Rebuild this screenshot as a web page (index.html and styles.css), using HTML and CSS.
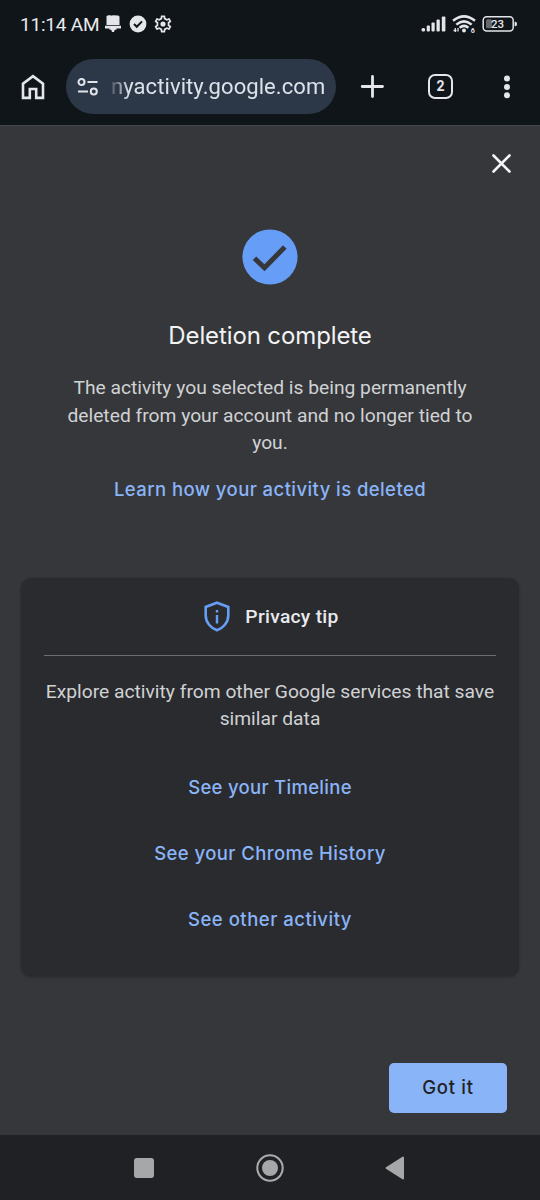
FILE: index.html
```html
<!DOCTYPE html>
<html lang="en">
<head>
<meta charset="utf-8">
<title>My Activity</title>
<link rel="stylesheet" href="styles.css">
</head>
<body>
<div class="screen">
  <header class="status">
    <span class="clock">11:14 AM</span>
    <svg class="s-app" width="18" height="18" viewBox="0 0 18 18"><path d="M2.500 1.500Q2.500 .5 4 .5L6 0 7 .8 9 .2 14 .5Q15.500 .6 15.500 2V10H2.500zM1 10.800H17V13.400H1zM5.500 13.200H12.500V14.800H10.800L10 17H8L7.200 14.800H5.500z" fill="#e4e6e9"/></svg>
    <svg class="s-check" width="18" height="18" viewBox="0 0 18 18"><circle cx="9" cy="9" r="8.400" fill="#e4e6e9"/><path d="M5 9 7.800 11.800 13 6.400" fill="none" stroke="#101519" stroke-width="2"/></svg>
    <svg class="s-gear" width="18" height="18" viewBox="1.500 1.500 21 21" fill="#e4e6e9"><path d="M19.430 12.980c.04-.32.070-.64.070-.98s-.03-.66-.07-.98l2.110-1.650c.19-.15.240-.42.120-.64l-2-3.460c-.12-.22-.39-.3-.61-.22l-2.490 1c-.52-.4-1.080-.73-1.690-.98l-.38-2.650A.488.488 0 0 0 14 2h-4c-.25 0-.46.180-.49.420l-.38 2.650c-.61.250-1.170.590-1.690.980l-2.490-1c-.23-.09-.49 0-.61.220l-2 3.460c-.13.220-.07.490.120.640l2.110 1.650c-.04.320-.07.650-.07.980s.03.660.070.980l-2.110 1.650c-.19.150-.24.420-.12.640l2 3.460c.12.220.39.300.610.220l2.490-1c.52.400 1.080.730 1.690.980l.38 2.650c.03.240.24.420.49.420h4c.25 0 .46-.18.490-.42l.38-2.650c.61-.25 1.170-.59 1.690-.98l2.490 1c.23.090.49 0 .61-.22l2-3.460c.12-.22.070-.49-.12-.64zM17.450 11.270c.04.310.050.520.050.730s-.02.430-.05.730l-.14 1.130.89.700 1.080.840-.7 1.210-1.270-.51-1.040-.42-.9.680c-.43.320-.84.560-1.250.730l-1.060.43-.16 1.130-.2 1.350h-1.400l-.35-2.480-1.060-.43c-.43-.18-.83-.41-1.230-.71l-.91-.7-1.060.43-1.270.510-.7-1.210 1.080-.84.890-.7-.14-1.130c-.03-.31-.05-.54-.05-.74s.02-.43.050-.73l.14-1.130-.89-.7-1.080-.84.7-1.210 1.270.51 1.040.42.900-.68c.43-.32.840-.56 1.250-.73l1.060-.43.360-2.480h1.390l.35 2.480 1.060.43c.43.180.83.410 1.230.710l.91.700 1.060-.43 1.270-.51.700 1.210-1.070.850-.89.700z"/><circle cx="12" cy="12" r="3"/></svg>
    <svg class="s-signal" width="26" height="18" viewBox="0 0 26 18" fill="#e4e6e9"><rect x=".5" y="13" width="3.600" height="3.500" rx="1.500"/><rect x="5.700" y="10.500" width="3.200" height="6" rx="1"/><rect x="10.500" y="7.500" width="3.200" height="9" rx="1"/><rect x="15.500" y="4.500" width="3.300" height="12" rx="1"/><rect x="20.800" y="1.500" width="3.600" height="15" rx="1"/></svg>
    <svg class="s-wifi" width="24" height="18" viewBox="0 0 24 18"><g fill="none" stroke="#e4e6e9" stroke-width="2.500"><path d="M1 5.800Q12-3 23 5.800"/><path d="M4.300 9.600Q12 3.200 19.700 9.600"/><path d="M7.600 12.800Q12 9 16.400 12.800"/></g><circle cx="12" cy="15.500" r="2" fill="#e4e6e9"/><path d="M3.300 13V17M1.500 15.500H4.500M6 13V16.500" stroke="#e4e6e9" stroke-width="1.300"/><text x="18.800" y="17.500" class="wifi-gen">6</text></svg>
    <svg class="s-battery" width="36" height="18" viewBox="0 0 36 18"><rect x="1.200" y="1.700" width="30" height="14.200" rx="3.500" fill="none" stroke="#e4e6e9" stroke-width="1.500"/><rect x="4" y="4.300" width="6" height="9" rx="1.500" fill="#676a6d"/><path d="M33 7V11Q34.700 11 34.700 9T33 7Z" fill="#e4e6e9" stroke="#e4e6e9" stroke-width=".8"/><text x="15.500" y="13" text-anchor="middle" class="battery-level">23</text></svg>
  </header>
  <nav class="toolbar">
    <svg class="home" width="24" height="26" viewBox="0 0 24 26"><path d="M2 23.900V9.700L12 2.200 22 9.700V23.900H15.200V15H8.800V23.900Z" fill="none" stroke="#e4e6ea" stroke-width="2.600"/></svg>
    <div class="address">
      <svg width="22" height="18" viewBox="0 0 22 18" fill="none" stroke="#dfe3e9" stroke-width="2.100"><circle cx="4.500" cy="4" r="3"/><path d="M10.500 4H20.500M1 13.500H11"/><circle cx="16.800" cy="13.500" r="3"/></svg>
      <span class="url">nyactivity.google.com</span>
    </div>
    <svg class="plus" width="24" height="24" viewBox="0 0 24 24"><path d="M12.500 1.500V21.500M2.200 11.500H22.500" stroke="#e4e6ea" stroke-width="2.800" stroke-linecap="round"/></svg>
    <span class="tabs">2</span>
    <svg class="more" width="8" height="24" viewBox="0 0 8 24" fill="#e4e6ea"><circle cx="4" cy="3.500" r="3"/><circle cx="4" cy="12" r="3"/><circle cx="4" cy="20.300" r="3"/></svg>
  </nav>
  <main class="content">
    <svg class="close" width="20" height="20" viewBox="0 0 20 20"><path d="M1.500 1.500 17.500 17.500M17.500 1.500 1.500 17.500" stroke="#f1f3f4" stroke-width="2.600" stroke-linecap="round"/></svg>
    <svg class="done" width="56" height="56" viewBox="0 0 56 56"><circle cx="28" cy="28" r="27.600" fill="#669df6"/><path d="M12.500 29.200 22.500 38.800 42.800 18" fill="none" stroke="#36373a" stroke-width="5"/></svg>
    <h1 class="title">Deletion complete</h1>
    <p class="body-text">The activity you selected is being permanently<br>deleted from your account and no longer tied to<br>you.</p>
    <a class="link learn">Learn how your activity is deleted</a>
    <section class="card">
      <div class="tip-head">
        <svg width="26" height="31" viewBox="0 0 26 31"><path d="M13 1.700 24.300 6V14.500C24.300 21.500 19 27.200 13 29.300 7 27.200 1.700 21.500 1.700 14.500V6Z" fill="none" stroke="#669df6" stroke-width="2.600"/><path d="M13 14V22.500M13 8.900V11.500" stroke="#669df6" stroke-width="2.400"/></svg>
        <h2>Privacy tip</h2>
      </div>
      <p class="body-text explore">Explore activity from other Google services that save<br>similar data</p>
      <a class="link timeline">See your Timeline</a>
      <a class="link history">See your Chrome History</a>
      <a class="link other">See other activity</a>
    </section>
    <button class="got-it">Got it</button>
  </main>
  <footer class="navbar">
    <svg width="20" height="20" viewBox="0 0 20 20"><rect width="20" height="20" rx="3" fill="#a5a7a8"/></svg>
    <svg width="28" height="28" viewBox="0 0 28 28"><circle cx="14" cy="14" r="12.700" fill="none" stroke="#aaacad" stroke-width="2"/><circle cx="14" cy="14" r="8" fill="#a5a7a8"/></svg>
    <svg width="20" height="24" viewBox="0 0 20 24"><path d="M1.500 12 18 1.500V22.500Z" fill="#a5a7a8" stroke="#a5a7a8" stroke-width="2" stroke-linejoin="round"/></svg>
  </footer>
</div>
</body>
</html>
```
FILE: styles.css
```css
* { box-sizing: border-box; }
body { margin: 0; background: #36373a; font-family: Roboto, sans-serif; }
svg { display: block; flex: none; }
h1, h2, p { margin: 0; white-space: nowrap; }
.screen { width: 540px; height: 1200px; display: flex; flex-direction: column; overflow: hidden; }

.status { height: 48px; flex: none; display: flex; align-items: center; padding: 0 22px 0 20px; background: #101519; color: #e8eaed; }
.clock { width: 84px; font-size: 19px; font-weight: 450; letter-spacing: -.2px; white-space: nowrap; }
.s-check { margin-left: 7px; }
.s-gear { margin-left: 7px; }
.s-signal { margin-left: auto; }
.s-wifi { margin-left: 5px; }
.s-battery { margin-left: 6px; }
.wifi-gen { font: 700 7px Roboto, sans-serif; fill: #e4e6e9; }
.battery-level { font: 500 11.500px Roboto, sans-serif; fill: #e4e6e9; }

.toolbar { height: 78px; flex: none; display: flex; align-items: center; padding: 0 29px 0 21px; background: #101519; border-bottom: 1px solid #42474b; }
.address { width: 270px; height: 55px; margin-left: 21px; padding-left: 11px; border-radius: 28px; display: flex; align-items: center; gap: 12px; background: #2c3847; }
.url { font-size: 22px; letter-spacing: .08px; color: #dce2ea; white-space: nowrap; -webkit-mask-image: linear-gradient(90deg, rgba(0,0,0,.2), #000 18px); mask-image: linear-gradient(90deg, rgba(0,0,0,.2), #000 18px); }
.plus { margin-left: 24px; }
.tabs { width: 25px; height: 25px; margin-left: 44px; border: 2.500px solid #e4e6ea; border-radius: 7px; color: #e4e6ea; font: 700 14px/21px Roboto, sans-serif; text-align: center; }
.more { margin-left: auto; }

.content { flex: 1; display: flex; flex-direction: column; align-items: center; padding: 28px 21px 0; background: #36373a; }
.close { align-self: flex-end; margin-right: 7px; }
.done { margin-top: 55px; }
.title { margin-top: 33px; font: 400 24px/36px Inter, sans-serif; letter-spacing: -.12px; color: #f1f3f4; }
.body-text { margin-top: 20px; font-size: 19.250px; line-height: 27.500px; color: #d0d2d5; text-align: center; }
.link { font: 500 18.500px/28px Inter, sans-serif; letter-spacing: .42px; color: #8ab4f8; white-space: nowrap; }
.learn { margin-top: 18px; }
.card { width: 498px; height: 398px; margin-top: 75px; padding: 0 23px; display: flex; flex-direction: column; align-items: center; border-radius: 10px; background: #2a2b2e; box-shadow: 0 1px 3px rgba(0,0,0,.3); }
.tip-head { width: 452px; height: 78px; padding-left: 3px; display: flex; align-items: center; justify-content: center; gap: 15px; border-bottom: 1px solid #6c6e72; }
.tip-head h2 { font-size: 19.250px; font-weight: 500; letter-spacing: .28px; color: #e8eaed; }
.explore { margin-top: 22px; }
.timeline { margin-top: 40px; letter-spacing: .3px; }
.history, .other { margin-top: 38px; }
.other { letter-spacing: .5px; }
.got-it { width: 118px; height: 50px; margin: 87px 12px 0 0; align-self: flex-end; padding: 0 0 2px; border: 0; border-radius: 5px; background: #8ab4f8; color: #202124; font: 500 18.500px/46px Inter, sans-serif; letter-spacing: .7px; }

.navbar { height: 65px; flex: none; display: flex; align-items: center; justify-content: space-between; padding: 0 135px 0 134px; background: #202124; }
```
